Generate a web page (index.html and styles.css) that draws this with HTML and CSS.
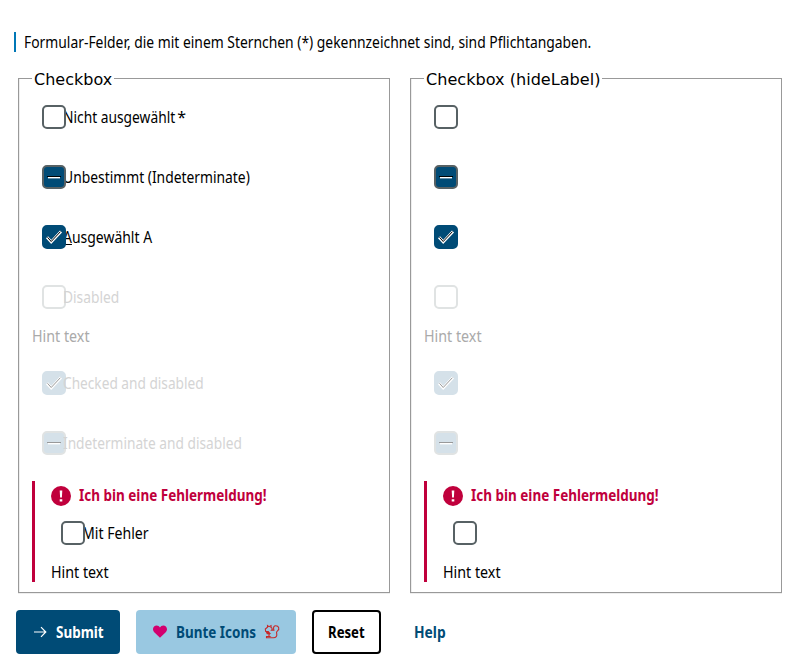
FILE: index.html
```
<!DOCTYPE html>
<html lang="de">
<head>
<meta charset="utf-8">
<title>Checkbox</title>
<link rel="stylesheet" href="styles.css">
</head>
<body>
<svg class="defs" aria-hidden="true">
  <symbol id="check" viewBox="0 0 24 24"><path d="M5 12.300l4.200 4.700L19 6.500" fill="none" stroke="#fff" stroke-width="2.800"/><path d="M5.500 12.300l3.700 4.200L18.400 6.700" fill="none" stroke="currentColor" stroke-width="1"/></symbol>
  <symbol id="minus" viewBox="0 0 24 24"><path d="M5 11h14v1H5z" fill="currentColor"/><path d="M6 12h12v1.400H6z" fill="#fff"/></symbol>
</svg>
<p class="note"><span class="t" data-w="567">Formular-Felder, die mit einem Sternchen (*) gekennzeichnet sind, sind Pflichtangaben.</span></p>
<main class="columns" id="columns"></main>
<div class="buttons">
  <button class="btn primary"><svg width="16" height="16" viewBox="0 0 16 16"><path d="M2 8h12M9 3.200L13.800 8 9 12.800" fill="none" stroke="#fff" stroke-width="1.200"/></svg><span class="t" data-w="48">Submit</span></button>
  <button class="btn secondary"><svg width="16" height="16" viewBox="0 0 16 16"><path d="M8 13.700L2 8C-.5 5 2 1.600 4.600 1.600 6.200 1.600 7.300 2.300 8 3.600c.7-1.300 1.800-2 3.400-2C14 1.600 16.500 5 14 8z" fill="#d2006e"/></svg><span class="t" data-w="80">Bunte Icons</span><svg width="16" height="16" viewBox="0 0 16 16"><path d="M3.500 3.200V1.600L5 2.700l2-1.100v2c1.300.5 1.500 1.600.6 2.500h2.300C9 3.300 10 1.700 11.800 1.700c3.200 0 3.900 3.500 1.900 4.900-1.200.9-1.700 1.500-1 3.200.7 2-.8 4-3.200 4h-7v-1.300h3.200c-1.200-.8-1-1.900 0-2.700H3.200L2.700 8.600h2.500L4.300 7.500H1.700L1.300 5z" fill="none" stroke="#c62828" stroke-width="1.100"/></svg></button>
  <button class="btn reset"><span class="t" data-w="37">Reset</span></button>
  <button class="btn ghost"><span class="t" data-w="32">Help</span></button>
</div>
<script src="script.js"></script>
</body>
</html>
```
FILE: styles.css
```
* { box-sizing: border-box; }
body { margin: 0; background: #fff; color: #000; font: 16px/20px "Noto Sans", "Open Sans", sans-serif; }
.defs { position: absolute; width: 0; height: 0; }
.t { display: inline-block; white-space: nowrap; transform-origin: 0 50%; }
.note { margin: 32px 14px 0; height: 20px; padding-left: 8px; border-left: 2px solid #0077b6; }
.columns { display: grid; grid-template-columns: 372px 372px; gap: 20px; margin: 17px 0 0 18px; }
.group { height: 524px; margin: 0; min-width: 0; padding: 18px 13px 0; border: 1px solid #999; box-shadow: inset 1px 0 #eee, 0 1px #eee; }
.group legend { padding: 1px 2px 0; height: 18px; font-family: "DejaVu Sans", sans-serif; }
.field { display: flex; align-items: center; height: 24px; margin: 0 0 36px 10px; }
.box { position: relative; z-index: 1; flex: none; width: 24px; height: 24px; border: 2px solid #576164; border-radius: 5px; background: #fff; color: #000; }
.box svg { display: block; width: 24px; height: 24px; margin: -2px; }
.box.on { background: #004b76; }
.box.checked { border-color: #004b76; }
.label { margin-left: -3px; }
.star-mark { margin-left: 2px; }
.off .box { z-index: 0; border-color: #e0e3e3; color: #999; }
.off .box.on { background: #d5e1e9; }
.off .box.checked { border-color: #d5e1e9; }
.off .label { color: #d4d4d4; }
.field.hinted { margin-bottom: 17px; }
.hint { height: 20px; }
.gray { color: #aaa; margin-bottom: 25px; }
.error { height: 101px; margin-top: -10px; border-left: 3px solid #c0003c; padding: 5px 0 0 16px; }
.message { display: flex; gap: 8px; height: 20px; color: #c0003c; font-weight: 700; }
.message .t { margin-top: -1px; }
.error .field { margin: 15px 0 17px 10px; }
.buttons { display: flex; gap: 16px; margin: 17px 0 0 16px; }
.btn { display: flex; align-items: center; gap: 8px; height: 44px; padding: 0 16px; border: 0; border-radius: 4px; font: 700 16px/20px "Noto Sans", sans-serif; }
.primary { width: 104px; color: #fff; background: #004b76; }
.secondary { width: 160px; color: #004b76; background: #99c8e1; }
.reset { width: 69px; color: #000; background: #fff; border: 2px solid #000; padding: 0 14px; }
.ghost { width: 64px; color: #004b76; background: none; margin-left: 1px; }
```
FILE: script.js
```
const rows = [
  ["Nicht ausgewählt", 112, "star", ""],
  ["Unbestimmt (Indeterminate)", 187, "", "minus"],
  ["<u>A</u>usgewählt A", 89, "", "check"],
  ["Disabled", 56, "off hinted", ""],
  ["Checked and disabled", 141, "off", "check"],
  ["Indeterminate and disabled", 179, "off", "minus"]
];
const text = (s, w, c = "") => `<span class="t ${c}" data-w="${w}">${s}</span>`;
const box = icon => `<span class="box ${icon ? "on" : ""} ${icon === "check" ? "checked" : ""}">${icon ? `<svg><use href="#${icon}"/></svg>` : ""}</span>`;
const field = ([s, w, c, icon], labels) => `<div class="field ${c}">${box(icon)}${labels ? text(s, w, "label") + (c === "star" ? "<span class='star-mark'>*</span>" : "") : ""}</div>` + (c.includes("hinted") ? `<div class="hint gray">${text("Hint text", 58)}</div>` : "");
const group = (title, w, labels) => `<fieldset class="group"><legend>${text(title, w)}</legend>${rows.map(r => field(r, labels)).join("")}<div class="error"><div class="message"><svg width="20" height="20" viewBox="0 0 20 20"><circle cx="10" cy="10" r="10" fill="#c0003c"/><path d="M8.700 4.500h2.600l-.4 7H9.100zM8.700 13.200h2.600v2.400H8.700z" fill="#fff"/></svg>${text("Ich bin eine Fehlermeldung!", 188)}</div>${field(["Mit Fehler", 67, "", ""], labels)}<div class="hint">${text("Hint text", 58)}</div></div></fieldset>`;
document.getElementById("columns").innerHTML = group("Checkbox", 78, true) + group("Checkbox (hideLabel)", 174, false);

document.querySelectorAll(".t").forEach(el => {
  const natural = el.offsetWidth, wanted = Number(el.dataset.w);
  el.style.transform = `scaleX(${wanted / natural})`;
  el.style.marginRight = `${wanted - natural}px`;
});
```
